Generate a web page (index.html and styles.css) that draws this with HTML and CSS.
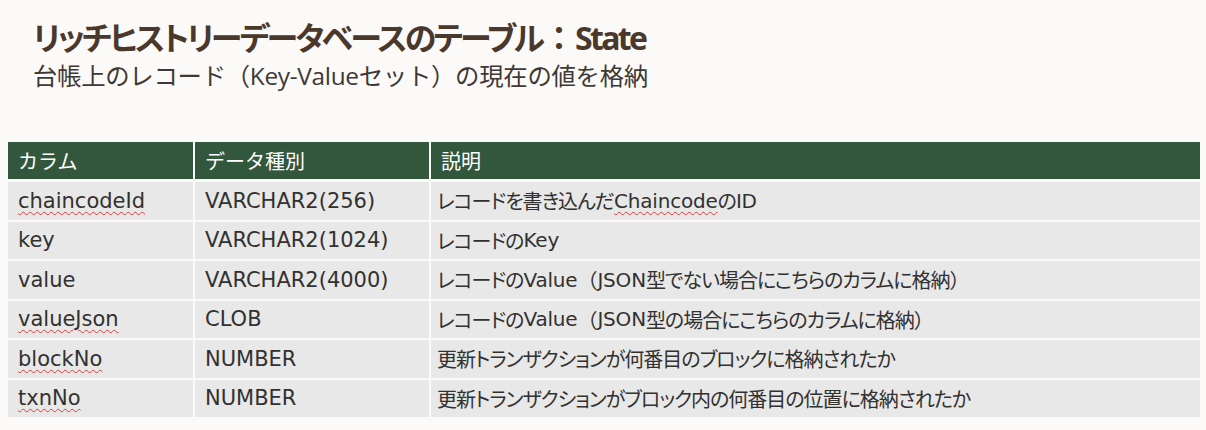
FILE: index.html
```html
<!DOCTYPE html>
<html lang="ja">
<head>
<meta charset="utf-8">
<link rel="stylesheet" href="styles.css">
</head>
<body>
<div class="slide">
  <header class="head">
    <h1 class="title">リッチヒストリーデータベースのテーブル<span class="full">：</span>State</h1>
    <p class="subtitle">台帳上のレコード<span class="full">（</span>Key-Valueセット<span class="full">）</span>の現在の値を格納</p>
  </header>
  <div class="grid">
    <div class="th">カラム</div><div class="th">データ種別</div><div class="th">説明</div>
    <div class="td"><span class="sp">chaincodeId</span></div><div class="td">VARCHAR2(256)</div><div class="td jp">レコードを書き込んだ<span class="lat sp">Chaincode</span>の<span class="lat">ID</span></div>
    <div class="td">key</div><div class="td">VARCHAR2(1024)</div><div class="td jp">レコードの<span class="lat">Key</span></div>
    <div class="td">value</div><div class="td">VARCHAR2(4000)</div><div class="td jp">レコードの<span class="lat">Value</span><span class="full">（</span><span class="lat">JSON</span>型でない場合にこちらのカラムに格納<span class="full">）</span></div>
    <div class="td"><span class="sp">valueJson</span></div><div class="td">CLOB</div><div class="td jp">レコードの<span class="lat">Value</span><span class="full">（</span><span class="lat">JSON</span>型の場合にこちらのカラムに格納<span class="full">）</span></div>
    <div class="td"><span class="sp">blockNo</span></div><div class="td">NUMBER</div><div class="td jp">更新トランザクションが何番目のブロックに格納されたか</div>
    <div class="td"><span class="sp">txnNo</span></div><div class="td">NUMBER</div><div class="td jp">更新トランザクションがブロック内の何番目の位置に格納されたか</div>
  </div>
</div>
</body>
</html>
```

FILE: styles.css
```css
html, body {
  margin: 0;
  padding: 0;
  background: #fbfaf8;
}
body {
  width: 1206px;
  height: 430px;
  overflow: hidden;
  font-family: "Open Sans", "Noto Sans CJK JP", sans-serif;
}
.slide {
  padding: 16px 6px 0 8px;
}
.head {
  padding-left: 25px;
}
.title {
  margin: 0;
  font-family: "Open Sans", "Noto Sans CJK JP", sans-serif;
  font-weight: 700;
  font-size: 32px;
  line-height: 44px;
  color: #4b382d;
  font-feature-settings: "palt";
  letter-spacing: -2.7px;
}
.title .full {
  font-feature-settings: normal;
  letter-spacing: 0;
  padding: 0 0 0 1px;
}
.subtitle {
  margin: 0;
  font-size: 24.4px;
  line-height: 31px;
  color: #3e3935;
  letter-spacing: -0.3px;
}
.grid {
  margin-top: 51px;
  display: grid;
  grid-template-columns: 185px 234px 1fr;
  grid-template-rows: 38px;
  grid-auto-rows: 37.5px;
  column-gap: 2px;
  row-gap: 2px;
}
.th {
  background: #33573c;
  color: #ffffff;
  font-size: 20px;
  display: flex;
  align-items: center;
  padding-left: 10px;
  margin-bottom: 1px;
}
.td {
  background: #e8e8e8;
  color: #333130;
  font-family: "DejaVu Sans", "Noto Sans CJK JP", sans-serif;
  font-size: 21px;
  display: flex;
  align-items: center;
  padding-left: 10px;
  white-space: nowrap;
}
.jp {
  padding-left: 6px;
  font-size: 20px;
  font-feature-settings: "palt";
  letter-spacing: -1px;
}
.jp .full {
  font-feature-settings: normal;
  letter-spacing: 0;
}
.jp .lat {
  font-size: 20px;
  letter-spacing: -0.2px;
}
.sp {
  text-decoration: underline wavy #e03c3c;
  text-decoration-thickness: 1px;
  text-underline-offset: 3px;
}
```
